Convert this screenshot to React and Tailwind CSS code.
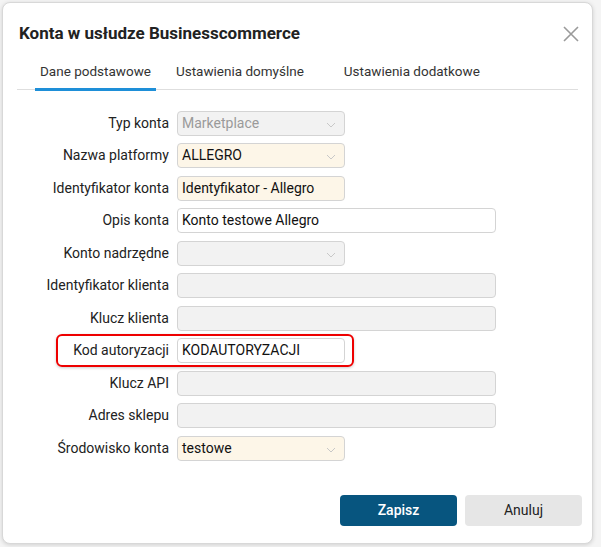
import React from "react";

const Chevron = () => (
  <svg width="10" height="6" viewBox="0 0 10 6" className="absolute right-[8px] top-[10px]"><path d="M1 1l4 4 4-4" fill="none" stroke="#c8c8c8" strokeWidth="1"/></svg>
);

function Field({ label, value, kind, wide, highlight }) {
  const bg = kind === "yellow" || kind === "yellowplain" ? "bg-[#fdf6e8]" : kind === "grey" ? "bg-[#f2f2f2]" : "bg-white";
  const input = (
    <div className={`relative h-[25px] ${wide ? "w-[319px]" : "w-[168px]"} ${bg} border border-[#d4d4d4] rounded-[4px] px-[4px] flex items-center text-[14px] ${kind === "grey" && value ? "text-[#9a9a9a]" : "text-[#111]"}`}>
      {value}
      {(kind === "yellow" || kind === "grey") && !wide && <Chevron />}
    </div>
  );
  return (
    <div className="h-[32.5px] flex items-center">
      <div className={`flex items-center gap-[8px] ${highlight ? "border-2 border-[#e00] rounded-[6px] ml-[53px] pl-[10px] pr-[7px] h-[33px] shadow-[0_1px_3px_rgba(0,0,0,0.2)]" : ""}`}>
        <div className={`${highlight ? "w-[101px]" : "w-[166px]"} text-right text-[14px] text-[#222]`}>{label}</div>
        {input}
      </div>
    </div>
  );
}

export default function App() {
  return (
    <div className="w-[601px] h-[547px] bg-[#f4f4f4] p-[2px] pr-[8px] pb-[3px]" style={{ fontFamily: "Roboto, sans-serif" }}>
      <div className="h-full bg-white rounded-[8px] border border-[#d8d8d8] shadow-[0_1px_4px_rgba(0,0,0,0.15)] flex flex-col">
        <div className="flex items-center justify-between pl-[16px] pr-[12px] pt-[18px]">
          <div className="text-[17px] font-bold text-[#222]">Konta w usłudze Businesscommerce</div>
          <svg width="18" height="18" viewBox="0 0 18 18"><path d="M2 2l14 14M16 2L2 16" stroke="#9a9a9a" strokeWidth="1.6"/></svg>
        </div>
        <div className="mx-[14px] mt-[14px] border-b border-[#dedede] flex text-[13.5px] text-[#333]">
          <div className="ml-[18px] px-[5px] pb-[6px] border-b-[3px] border-[#1e8fd8] -mb-[2px]">Dane podstawowe</div>
          <div className="ml-[20px] pb-[8px]">Ustawienia domyślne</div>
          <div className="ml-[40px] pb-[8px]">Ustawienia dodatkowe</div>
        </div>
        <div className="pt-[17px]">
          <Field label="Typ konta" value="Marketplace" kind="grey" />
          <Field label="Nazwa platformy" value="ALLEGRO" kind="yellow" />
          <Field label="Identyfikator konta" value="Identyfikator - Allegro" kind="yellowplain" />
          <Field label="Opis konta" value="Konto testowe Allegro" wide />
          <Field label="Konto nadrzędne" value="" kind="grey" />
          <Field label="Identyfikator klienta" value="" kind="grey" wide />
          <Field label="Klucz klienta" value="" kind="grey" wide />
          <Field label="Kod autoryzacji" value="KODAUTORYZACJI" highlight />
          <Field label="Klucz API" value="" kind="grey" wide />
          <Field label="Adres sklepu" value="" kind="grey" wide />
          <Field label="Środowisko konta" value="testowe" kind="yellow" />
        </div>
        <div className="flex-1" />
        <div className="flex justify-end gap-[8px] pr-[10px] pb-[17px]">
          <button className="w-[117px] h-[31px] rounded-[4px] bg-[#07557f] text-white text-[14px] font-medium">Zapisz</button>
          <button className="w-[117px] h-[31px] rounded-[4px] bg-[#e6e6e6] text-[#222] text-[14px]">Anuluj</button>
        </div>
      </div>
    </div>
  );
}
